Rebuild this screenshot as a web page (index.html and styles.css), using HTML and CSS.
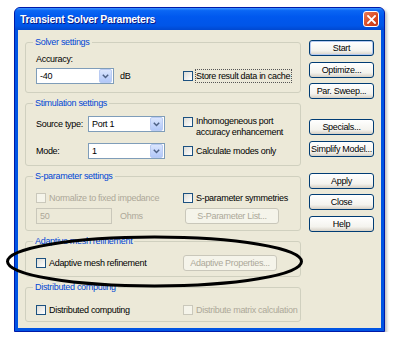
FILE: index.html
```html
<!DOCTYPE html>
<html lang="en">
<head>
  <meta charset="UTF-8">
  <title>Transient Solver Parameters</title>
  <link rel="stylesheet" href="styles.css">
</head>
<body>
<div class="window">
  <div class="titlebar">
    <span class="title">Transient Solver Parameters</span>
    <span class="close-btn">
      <svg width="9" height="9" viewBox="0 0 9 9"><path d="M1 1 L8 8 M8 1 L1 8" stroke="#fff" stroke-width="1.8" stroke-linecap="square"/></svg>
    </span>
  </div>
  <div class="client">
    <div class="groups">
      <fieldset class="group g-solver">
        <legend>Solver settings</legend>
        <div class="label-top">Accuracy:</div>
        <div class="row">
          <div class="col-left">
            <div class="combo w-acc"><span class="combo-value">-40</span><span class="combo-btn"><svg width="7" height="5" viewBox="0 0 7 5"><path d="M0.8 0.8 L3.5 3.5 L6.2 0.8" fill="none" stroke="#4d6185" stroke-width="1.5"/></svg></span></div>
            <span class="unit">dB</span>
          </div>
          <label class="check"><span class="box"></span><span class="text focus">Store result data in cache</span></label>
        </div>
      </fieldset>

      <fieldset class="group g-stim">
        <legend>Stimulation settings</legend>
        <div class="row top">
          <div class="col-left">
            <span class="field-label">Source type:</span>
            <div class="combo w-src"><span class="combo-value">Port 1</span><span class="combo-btn"><svg width="7" height="5" viewBox="0 0 7 5"><path d="M0.8 0.8 L3.5 3.5 L6.2 0.8" fill="none" stroke="#4d6185" stroke-width="1.5"/></svg></span></div>
          </div>
          <label class="check multi"><span class="box"></span><span class="text">Inhomogeneous port<br>accuracy enhancement</span></label>
        </div>
        <div class="row second">
          <div class="col-left">
            <span class="field-label">Mode:</span>
            <div class="combo w-src"><span class="combo-value">1</span><span class="combo-btn"><svg width="7" height="5" viewBox="0 0 7 5"><path d="M0.8 0.8 L3.5 3.5 L6.2 0.8" fill="none" stroke="#4d6185" stroke-width="1.5"/></svg></span></div>
          </div>
          <label class="check"><span class="box"></span><span class="text">Calculate modes only</span></label>
        </div>
      </fieldset>

      <fieldset class="group g-spar">
        <legend>S-parameter settings</legend>
        <div class="row">
          <div class="col-left">
            <label class="check disabled"><span class="box"></span><span class="text">Normalize to fixed impedance</span></label>
          </div>
          <label class="check"><span class="box"></span><span class="text">S-parameter symmetries</span></label>
        </div>
        <div class="row second">
          <div class="col-left">
            <div class="textbox disabled">50</div>
            <span class="unit disabled-text">Ohms</span>
          </div>
          <span class="btn disabled wide">S-Parameter List...</span>
        </div>
      </fieldset>

      <fieldset class="group g-adapt">
        <legend>Adaptive mesh refinement</legend>
        <div class="row">
          <div class="col-left">
            <label class="check"><span class="box"></span><span class="text">Adaptive mesh refinement</span></label>
          </div>
          <span class="btn disabled wide">Adaptive Properties...</span>
        </div>
      </fieldset>

      <fieldset class="group g-dist">
        <legend>Distributed computing</legend>
        <div class="row">
          <div class="col-left">
            <label class="check"><span class="box"></span><span class="text">Distributed computing</span></label>
          </div>
          <label class="check disabled"><span class="box"></span><span class="text">Distribute matrix calculation</span></label>
        </div>
      </fieldset>
    </div>

    <div class="buttons">
      <span class="btn default">Start</span>
      <span class="btn">Optimize...</span>
      <span class="btn">Par. Sweep...</span>
      <span class="btn section">Specials...</span>
      <span class="btn">Simplify Model...</span>
      <span class="btn section-small">Apply</span>
      <span class="btn">Close</span>
      <span class="btn">Help</span>
    </div>
  </div>
</div>

<svg class="mark" width="400" height="339" viewBox="0 0 400 339">
  <ellipse cx="154.5" cy="261.5" rx="147" ry="24.5" fill="none" stroke="#000" stroke-width="3"/>
</svg>
</body>
</html>
```

FILE: styles.css
```css
* { box-sizing: border-box; }
body {
  margin: 0;
  background: #fff;
  font-family: 'Liberation Sans', Arial, sans-serif;
  font-size: 9px;
  letter-spacing: -0.3px;
  color: #000;
}
.window {
  margin: 7px 0 0 14px;
  width: 371px;
  height: 325px;
  background: #0054e3;
  border: 1px solid #0019a8;
  border-radius: 6px 6px 0 0;
  padding: 0 3px 3px;
  box-shadow: 2px 2px 3px rgba(0,0,0,0.25);
  display: flex;
  flex-direction: column;
}
.titlebar {
  height: 22px;
  margin: 0 -3px;
  padding: 0 5px 0 5px;
  border-radius: 5px 5px 0 0;
  background: linear-gradient(#3d95ff 0%, #0a66f4 12%, #0058ee 40%, #0055e8 80%, #0048d0 100%);
  display: flex;
  align-items: center;
  justify-content: space-between;
}
.title {
  color: #fff;
  font-weight: bold;
  font-size: 10.5px;
  letter-spacing: -0.25px;
  text-shadow: 1px 1px #0a1883;
}
.close-btn {
  width: 16px;
  height: 16px;
  border: 1px solid #fff;
  border-radius: 3px;
  background: linear-gradient(135deg, #e87c5a, #d9481f 60%, #c4371a);
  display: flex;
  align-items: center;
  justify-content: center;
}
.client {
  flex: 1;
  background: #ece9d8;
  display: flex;
  padding: 6px 0 0 7px;
}
.groups {
  width: 276px;
  display: flex;
  flex-direction: column;
  gap: 4px;
}
.group {
  margin: 0;
  padding: 0 9px 0 10px;
  border: 1px solid #d0d0bf;
  border-radius: 3px;
  min-width: 0;
}
.group legend {
  color: #0046d5;
  line-height: 12px;
  padding: 0 2px;
  margin-left: -3px;
}
.g-solver { height: 57px; }
.g-stim { height: 69px; }
.g-spar { height: 61px; }
.g-adapt { height: 42px; }
.g-dist { height: 41px; }

.label-top {
  line-height: 12px;
  margin-top: 5px;
  margin-bottom: 3px;
}
.row {
  display: flex;
  align-items: center;
  height: 16px;
}
.row.top {
  align-items: flex-start;
  height: auto;
  margin-top: 7px;
}
.g-stim .row.second { margin-top: 5px; }
.g-spar .row { margin-top: 8px; }
.g-spar .row.second { margin-top: 2px; }
.g-adapt .row { margin-top: 8px; }
.g-dist .row { margin-top: 9px; }
.col-left {
  width: 147px;
  display: flex;
  align-items: center;
  flex-shrink: 0;
  white-space: nowrap;
}
.field-label {
  width: 52px;
  flex-shrink: 0;
}
.row.top .field-label { line-height: 16px; }
.combo {
  height: 16px;
  background: #fff;
  border: 1px solid #7f9db9;
  display: flex;
  align-items: center;
  justify-content: space-between;
  padding: 0 1px 0 3px;
  flex-shrink: 0;
}
.w-acc { width: 78px; }
.w-src { width: 77px; }
.combo-btn {
  width: 13px;
  height: 14px;
  border: 1px solid #b9cbf3;
  border-radius: 2px;
  background: linear-gradient(#dbe6fd, #c1d3fb 60%, #b2c8f8);
  display: flex;
  align-items: center;
  justify-content: center;
}
.unit {
  margin-left: 6px;
}
.check {
  display: flex;
  align-items: center;
  gap: 3px;
  white-space: nowrap;
}
.check.multi {
  align-items: flex-start;
  margin-top: 1px;
}
.check.multi .text {
  line-height: 11px;
  margin-top: -1px;
}
.box {
  width: 10px;
  height: 10px;
  flex-shrink: 0;
  border: 1px solid #1c5180;
  background: linear-gradient(135deg, #dcdcd7, #fff);
}
.focus {
  outline: 1px dotted #555;
  outline-offset: 0;
  padding: 1px 1px 1px 0;
}
.check.disabled .box {
  border-color: #cac8bb;
  background: #f5f4ea;
}
.check.disabled .text, .disabled-text {
  color: #aca899;
}
.textbox {
  width: 76px;
  height: 16px;
  border: 1px solid #c9c7ba;
  color: #aca899;
  padding-left: 3px;
  line-height: 14px;
}
.disabled-text { margin-left: 8px; }

.btn {
  width: 65px;
  height: 16px;
  border: 1px solid #003c74;
  border-radius: 3px;
  background: linear-gradient(#ffffff, #f4f3ee 70%, #d6d0c5);
  display: flex;
  align-items: center;
  justify-content: center;
  white-space: nowrap;
}
.btn.default {
  box-shadow: inset 0 0 0 1px #b4c8f0;
}
.btn.disabled {
  border-color: #c9c7ba;
  background: #f5f4ea;
  color: #aca899;
}
.btn.wide {
  width: 94px;
  margin-left: 2px;
}
.g-adapt .btn.wide { margin-left: 0; }
.buttons {
  margin-left: 8px;
  padding-top: 4px;
  display: flex;
  flex-direction: column;
  gap: 5.5px;
}
.btn.section { margin-top: 14.5px; }
.btn.section-small { margin-top: 10.5px; }

.mark {
  position: absolute;
  left: 0;
  top: 0;
  pointer-events: none;
}
```
